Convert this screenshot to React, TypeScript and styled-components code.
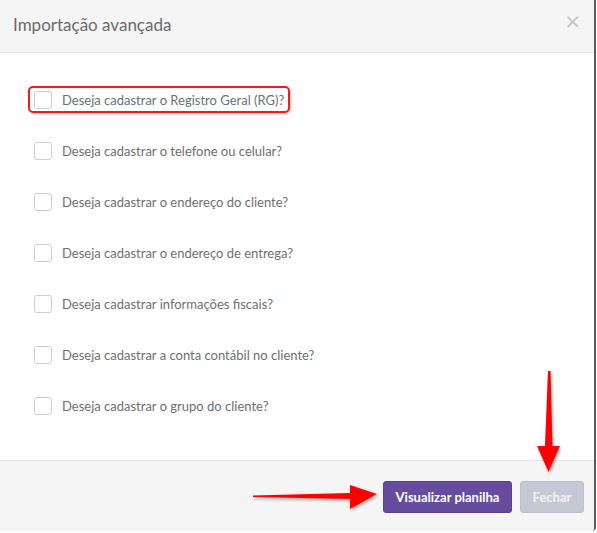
import React from "react";
import styled, { createGlobalStyle } from "styled-components";

const GlobalStyle = createGlobalStyle`
  html, body {
    margin: 0;
    padding: 0;
    background: #ffffff;
  }
  body {
    font-family: Lato, "Open Sans", sans-serif;
  }
`;

const options = [
  "Deseja cadastrar o Registro Geral (RG)?",
  "Deseja cadastrar o telefone ou celular?",
  "Deseja cadastrar o endereço do cliente?",
  "Deseja cadastrar o endereço de entrega?",
  "Deseja cadastrar informações fiscais?",
  "Deseja cadastrar a conta contábil no cliente?",
  "Deseja cadastrar o grupo do cliente?",
];

const App = () => {
  return (
    <>
      <GlobalStyle />
      <Modal>
        <Header>
          <Title>Importação avançada</Title>
          <CloseButton type="button">×</CloseButton>
        </Header>
        <Body>
          {options.map((label, i) => (
            <Row key={label} $highlighted={i === 0}>
              <Box type="checkbox" />
              <Label>{label}</Label>
            </Row>
          ))}
        </Body>
        <Footer>
          <PrimaryButton type="button">Visualizar planilha</PrimaryButton>
          <SecondaryButton type="button">Fechar</SecondaryButton>
        </Footer>

        {/* annotation arrows */}
        <ArrowRight viewBox="0 0 130 26" width="130" height="26">
          <path d="M0 10.5 L97 8 L97 0 L124 9 L97 24 L97 14 L0 12 Z" fill="#ff0000" />
        </ArrowRight>
        <ArrowDown viewBox="0 0 26 104" width="26" height="104">
          <path d="M12 0 L14.5 0 L16.5 75 L24 75 L12.5 101 L1 75 L9 75 Z" fill="#ff0000" />
        </ArrowDown>
      </Modal>
    </>
  );
};

export default App;

const Modal = styled.div`
  position: relative;
  width: 596px;
  height: 531px;
  display: flex;
  flex-direction: column;
  background: #ffffff;
  border-right: 2px solid #5b5b5b;
  border-bottom-right-radius: 4px;
  box-sizing: border-box;
  overflow: hidden;
`;

const Header = styled.div`
  height: 52px;
  flex-shrink: 0;
  display: flex;
  align-items: center;
  justify-content: space-between;
  padding: 0 13px 0 13px;
  background: #f5f5f5;
  border-bottom: 1px solid #e3e3e3;
`;

const Title = styled.h4`
  margin: 0 0 4px;
  font-size: 17px;
  font-weight: 400;
  color: #6b6b6b;
`;

const CloseButton = styled.button`
  border: none;
  background: none;
  padding: 0;
  margin-bottom: 10px;
  font-family: "DejaVu Sans", sans-serif;
  font-size: 20px;
  line-height: 1;
  color: #c2c2c2;
  cursor: pointer;
`;

const Body = styled.div`
  flex: 1;
  display: flex;
  flex-direction: column;
  gap: 31px;
  padding: 37px 0 0 34px;
`;

const Row = styled.label<{ $highlighted?: boolean }>`
  position: relative;
  display: flex;
  align-items: center;
  gap: 10px;
  height: 20px;
  width: fit-content;
  cursor: pointer;

  &::after {
    content: "";
    display: ${(p) => (p.$highlighted ? "block" : "none")};
    position: absolute;
    left: -6px;
    right: -6px;
    top: -4px;
    bottom: -3px;
    border: 2px solid #ee1c1c;
    border-radius: 5px;
    box-shadow: 1px 1px 2px rgba(0, 0, 0, 0.25);
    pointer-events: none;
  }
`;

const Box = styled.input`
  appearance: none;
  margin: 0;
  width: 18px;
  height: 18px;
  border: 1px solid #cfcfcf;
  border-radius: 3px;
  background: #ffffff;
  box-sizing: border-box;
`;

const Label = styled.span`
  font-size: 13px;
  color: #6f6f6f;
`;

const Footer = styled.div`
  height: 71px;
  flex-shrink: 0;
  display: flex;
  align-items: flex-start;
  justify-content: flex-end;
  gap: 8px;
  padding: 20px 10px 0 0;
  box-sizing: border-box;
  background: #f5f5f5;
  border-top: 1px solid #e3e3e3;
`;

const BaseButton = styled.button`
  height: 32px;
  border: none;
  border-radius: 3px;
  font-family: Lato, sans-serif;
  font-size: 13px;
  font-weight: 700;
  padding: 0;
  white-space: nowrap;
  cursor: pointer;
`;

const PrimaryButton = styled(BaseButton)`
  width: 129px;
  background: #664c9c;
  color: #ffffff;
  border: 1px solid #5a428b;
`;

const SecondaryButton = styled(BaseButton)`
  width: 64px;
  background: #c5c9d4;
  color: #f2f3f6;
  border: 1px solid #bcc1cc;
`;

const ArrowRight = styled.svg`
  position: absolute;
  left: 253px;
  top: 485px;
  filter: drop-shadow(1px 2px 1.5px rgba(0, 0, 0, 0.3));
`;

const ArrowDown = styled.svg`
  position: absolute;
  left: 536px;
  top: 371px;
  filter: drop-shadow(1px 2px 1.5px rgba(0, 0, 0, 0.3));
`;
